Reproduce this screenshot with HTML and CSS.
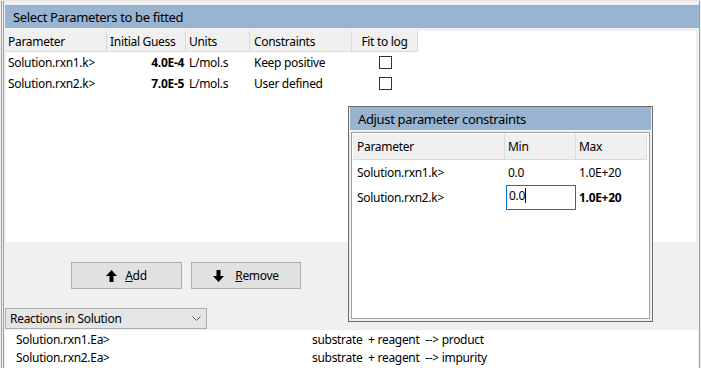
FILE: index.html
```html
<!DOCTYPE html>
<html lang="en">
<head>
    <meta charset="UTF-8">
    <title>Select Parameters to be fitted</title>
    <link rel="stylesheet" href="styles.css">
</head>
<body>
    <div class="window">
        <div class="frame">
            <div class="panel-title">Select Parameters to be fitted</div>

            <div class="grid">
                <div class="grid-head">
                    <div class="cell col-param">Parameter</div>
                    <div class="cell col-guess">Initial Guess</div>
                    <div class="cell col-units">Units</div>
                    <div class="cell col-constr">Constraints</div>
                    <div class="cell col-log">Fit to log</div>
                </div>
                <div class="grid-row">
                    <div class="cell col-param">Solution.rxn1.k&gt;</div>
                    <div class="cell col-guess num">4.0E-4</div>
                    <div class="cell col-units">L/mol.s</div>
                    <div class="cell col-constr">Keep positive</div>
                    <div class="cell col-log"><span class="checkbox"></span></div>
                </div>
                <div class="grid-row">
                    <div class="cell col-param">Solution.rxn2.k&gt;</div>
                    <div class="cell col-guess num">7.0E-5</div>
                    <div class="cell col-units">L/mol.s</div>
                    <div class="cell col-constr">User defined</div>
                    <div class="cell col-log"><span class="checkbox"></span></div>
                </div>
            </div>

            <div class="actions">
                <button class="btn" type="button">
                    <svg class="arrow" viewBox="0 0 11 12"><polygon points="5.5,0 11,6 7.5,6 7.5,12 3.5,12 3.5,6 0,6"/></svg>
                    <span><u>A</u>dd</span>
                </button>
                <button class="btn" type="button">
                    <svg class="arrow" viewBox="0 0 11 12"><polygon points="3.5,0 7.5,0 7.5,6 11,6 5.5,12 0,6 3.5,6"/></svg>
                    <span><u>R</u>emove</span>
                </button>
            </div>

            <div class="select">
                <span>Reactions in Solution</span>
                <svg class="chevron" viewBox="0 0 9 5"><polyline points="0.5,0.5 4.5,4.5 8.5,0.5"/></svg>
            </div>

            <div class="reactions">
                <div class="reaction">
                    <span>Solution.rxn1.Ea&gt;</span>
                    <span class="eq">substrate  + reagent  --&gt; product</span>
                </div>
                <div class="reaction">
                    <span>Solution.rxn2.Ea&gt;</span>
                    <span class="eq">substrate  + reagent  --&gt; impurity</span>
                </div>
            </div>
        </div>

        <!-- floating dialog -->
        <div class="dialog">
            <div class="dialog-title">Adjust parameter constraints</div>
            <div class="dialog-body">
                <div class="dgrid-head">
                    <div class="dcell dcol-param">Parameter</div>
                    <div class="dcell dcol-min">Min</div>
                    <div class="dcell dcol-max">Max</div>
                </div>
                <div class="dgrid-row">
                    <div class="dcell dcol-param">Solution.rxn1.k&gt;</div>
                    <div class="dcell dcol-min">0.0</div>
                    <div class="dcell dcol-max">1.0E+20</div>
                </div>
                <div class="dgrid-row">
                    <div class="dcell dcol-param">Solution.rxn2.k&gt;</div>
                    <div class="dcell dcol-min editing"><span class="edit">0.0<i class="caret"></i></span></div>
                    <div class="dcell dcol-max bold">1.0E+20</div>
                </div>
            </div>
        </div>
    </div>
</body>
</html>
```

FILE: styles.css
```css
* {
    box-sizing: border-box;
}

body {
    margin: 0;
    font-family: 'Noto Sans', sans-serif;
    font-size: 12px;
    letter-spacing: -0.3px;
    color: #000;
    background-color: #f0f0f0;
}

.window {
    position: relative;
    width: 701px;
    height: 368px;
    padding: 0 1px 0 1px;
    background-color: #f0f0f0;
    border-top: 1px solid #e6e6e6;
    overflow: hidden;
}

.frame {
    height: 100%;
    padding-top: 4px;
    border-left: 3px double #a0a0a0;
    border-right: 1px solid #a0a0a0;
    display: flex;
    flex-direction: column;
}

.panel-title {
    height: 23px;
    margin-left: 1px;
    padding-left: 8px;
    display: flex;
    align-items: center;
    background-color: #99b4d1;
    font-size: 13px;
    letter-spacing: -0.35px;
}

/* main parameter grid */
.grid {
    height: 211px;
    margin: 3px 3px 0 2px;
    background: #fff;
}

.grid-head,
.grid-row {
    display: flex;
}

.grid-head {
    height: 21px;
}

.grid-head .cell {
    background: #f0f0f0;
    border-right: 1px solid #dadada;
    border-bottom: 1px solid #dadada;
}

.grid-row {
    height: 21px;
}

.cell {
    display: flex;
    align-items: center;
    padding-left: 2px;
    white-space: nowrap;
}

.col-param { width: 101px; }
.col-guess { width: 79px; padding-left: 3px; }
.col-units { width: 64px; padding-left: 3px; }
.col-constr { width: 102px; padding-left: 4px; }
.col-log { width: 66px; justify-content: center; padding-left: 0; }

.num {
    justify-content: flex-end;
    padding-right: 2px;
    font-weight: bold;
}

.checkbox {
    width: 13px;
    height: 13px;
    border: 1px solid #333;
    background: #fff;
}

/* buttons */
.actions {
    display: flex;
    gap: 9px;
    margin: 20px 0 0 67px;
}

.btn {
    width: 111px;
    height: 27px;
    display: flex;
    align-items: center;
    justify-content: center;
    gap: 8px;
    background: #e1e1e1;
    border: 1px solid #adadad;
    font-family: inherit;
    font-size: 12px;
    letter-spacing: -0.3px;
    color: #000;
    padding: 0;
}

.btn + .btn {
    width: 110px;
    gap: 11px;
}

.arrow {
    flex-shrink: 0;
    width: 11px;
    height: 12px;
    fill: #000;
}

/* combo box */
.select {
    width: 202px;
    height: 21px;
    margin: 19px 0 0 1px;
    padding: 0 5px 0 4px;
    display: flex;
    align-items: center;
    justify-content: space-between;
    background: #e5e5e5;
    border: 1px solid #acacac;
}

.chevron {
    width: 9px;
    height: 5px;
    fill: none;
    stroke: #606060;
    stroke-width: 1;
}

/* reactions list */
.reactions {
    flex: 1;
    margin: 1px 1px 0 1px;
    padding-left: 11px;
    background: #fff;
}

.reaction {
    height: 18px;
    display: flex;
    align-items: center;
}

.reaction span:first-child {
    width: 296px;
}

.eq {
    white-space: pre;
}

/* dialog */
.dialog {
    position: absolute;
    left: 348px;
    top: 105px;
    width: 305px;
    height: 216px;
    padding: 0 1px 1px;
    border: 1px solid #6b6b6b;
    background: #f0f0f0;
    display: flex;
    flex-direction: column;
}

.dialog-title {
    height: 23px;
    padding-left: 8px;
    display: flex;
    align-items: center;
    background: #99b4d1;
    font-size: 13px;
    letter-spacing: -0.35px;
}

.dialog-body {
    flex: 1;
    margin: 2px 1px 1px;
    padding: 1px;
    border: 1px solid #a0a0a0;
    background: #fff;
}

.dgrid-head,
.dgrid-row {
    display: flex;
}

.dgrid-head {
    height: 26px;
}

.dgrid-head .dcell {
    background: #f0f0f0;
    border-right: 1px solid #dadada;
    border-bottom: 1px solid #dadada;
}

.dgrid-row {
    height: 25px;
}

.dcell {
    display: flex;
    align-items: center;
    padding-left: 3px;
    white-space: nowrap;
}

.dcol-param { width: 152px; padding-left: 4px; }
.dcol-min { width: 71px; }
.dcol-max { width: 71px; }

.editing {
    padding: 0;
    align-items: stretch;
}

.edit {
    width: 72px;
    margin-left: 1px;
    padding: 1px 0 0 2px;
    border: 1px solid #0078d7;
    background: #fff;
    display: flex;
    align-items: flex-start;
}

.caret {
    width: 1px;
    height: 15px;
    margin-top: 1px;
    background: #000;
}

.bold {
    font-weight: bold;
}
```
